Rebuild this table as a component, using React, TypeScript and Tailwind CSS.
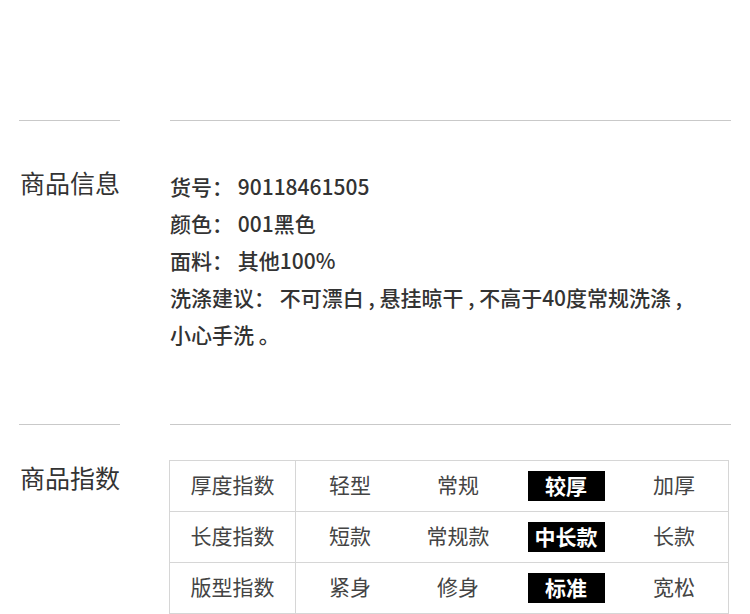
const FONT = "font-['Noto_Sans_CJK_SC','Noto_Sans',sans-serif]";

const infoRows = [
  { label: '货号：', value: '90118461505' },
  { label: '颜色：', value: '001黑色' },
  { label: '面料：', value: '其他100%' },
];

const indexRows = [
  { name: '厚度指数', options: ['轻型', '常规', '较厚', '加厚'], active: 2 },
  { name: '长度指数', options: ['短款', '常规款', '中长款', '长款'], active: 2 },
  { name: '版型指数', options: ['紧身', '修身', '标准', '宽松'], active: 2 },
];

function Section({ title, titleClass, children, bodyClass }: { title: string; titleClass: string; children: React.ReactNode; bodyClass: string }) {
  return (
    <div className="flex">
      <div className="ml-[19px] w-[101px] shrink-0 border-t border-[#c9c9c9]">
        <h2 className={`${titleClass} pl-[1px] text-[25px] leading-[37px] text-[#333] whitespace-nowrap font-normal`}>{title}</h2>
      </div>
      <div className={`ml-[50px] w-[561px] shrink-0 border-t border-[#c9c9c9] ${bodyClass}`}>{children}</div>
    </div>
  );
}

export default function App() {
  return (
    <div className={`w-[750px] h-[614px] overflow-hidden bg-white pt-[120px] ${FONT}`}>
      {/* 商品信息 */}
      <Section title="商品信息" titleClass="pt-[43px]" bodyClass="pt-[47px] pb-[71px]">
        <div className="text-[21px] leading-[37px] text-[#333] font-medium">
          {infoRows.map(r => (
            <div key={r.label} className="whitespace-nowrap">
              {r.label} {r.value}
            </div>
          ))}
          <div>
            洗涤建议： 不可漂白 , 悬挂晾干 , 不高于40度常规洗涤 ,
            <br />
            小心手洗 。
          </div>
        </div>
      </Section>

      {/* 商品指数 */}
      <Section title="商品指数" titleClass="pt-[34px]" bodyClass="pt-[35px]">
        <div className="ml-[-1px] w-[560px] border border-[#d6d6d6] border-b-0">
          {indexRows.map(row => (
            <div key={row.name} className="grid grid-cols-[126px_repeat(4,108px)] h-[51px] border-b border-[#d6d6d6] text-[21px] text-[#444]">
              <div className="flex items-center justify-center pb-[2px] border-r border-[#d6d6d6]">{row.name}</div>
              {row.options.map((opt, i) => (
                <div key={opt} className={i === row.active ? 'flex items-center justify-center' : 'flex items-center justify-center pb-[2px]'}>
                  {i === row.active ? (
                    <span className="flex items-center justify-center w-[77px] h-[30px] pb-[1px] bg-black text-white font-bold">{opt}</span>
                  ) : (
                    opt
                  )}
                </div>
              ))}
            </div>
          ))}
        </div>
      </Section>
    </div>
  );
}
